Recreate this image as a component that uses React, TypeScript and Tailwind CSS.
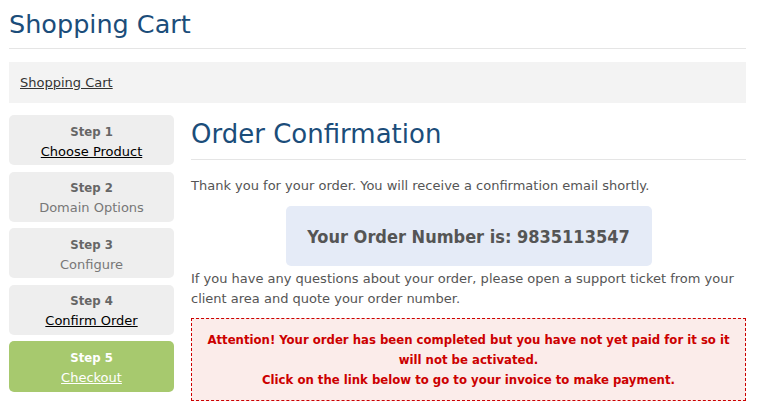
import React from 'react';

const steps = [
  { n: 1, label: 'Choose Product', link: true },
  { n: 2, label: 'Domain Options', link: false },
  { n: 3, label: 'Configure', link: false },
  { n: 4, label: 'Confirm Order', link: true },
  { n: 5, label: 'Checkout', link: true, active: true },
];

export default function App() {
  return (
    <div className="min-h-[411px] bg-white px-[9px] pt-[8px] font-['DejaVu_Sans',sans-serif] text-[13px] text-[#555]">
      <div className="w-[737px]">
        <h1 className="h-[41px] border-b border-[#e5e5e5] text-[25.5px] leading-[32px] text-[#1b4d7a]">Shopping Cart</h1>

        <div className="mt-[13px] h-[41px] bg-[#f3f3f3] px-[11px] leading-[41px]">
          <a href="#" className="text-[#333] underline">Shopping Cart</a>
        </div>

        <div className="mt-[12px] flex gap-[17px]">
          <div className="flex w-[165px] shrink-0 flex-col gap-[6.5px]">
            {steps.map((s) => (
              <div
                key={s.n}
                className={
                  s.active
                    ? 'flex h-[50.5px] flex-col items-center justify-center rounded-[5px] bg-[#a7c96e] pt-[2px] text-white'
                    : 'flex h-[50px] flex-col items-center justify-center rounded-[5px] bg-[#eeeeee] pt-[2px] text-[#777]'
                }
              >
                <div
                  className={
                    s.active
                      ? "font-['DejaVu_Sans_Condensed','DejaVu_Sans',sans-serif] font-bold leading-[20px] text-white"
                      : "font-['DejaVu_Sans_Condensed','DejaVu_Sans',sans-serif] font-bold leading-[20px] text-[#666]"
                  }
                >
                  Step {s.n}
                </div>
                {s.link ? (
                  <a href="#" className={s.active ? 'leading-[19px] text-white underline' : 'leading-[19px] text-black underline'}>
                    {s.label}
                  </a>
                ) : (
                  <div className="leading-[19px]">{s.label}</div>
                )}
              </div>
            ))}
          </div>

          <div className="flex-1">
            <h2 className="h-[45px] border-b border-[#e5e5e5] pt-[3px] text-[26px] leading-[32px] text-[#1b4d7a]">Order Confirmation</h2>
            <p className="mt-[16px] leading-[20px]">Thank you for your order. You will receive a confirmation email shortly.</p>
            <div className="mx-auto mt-[10px] flex h-[60px] w-[366px] items-center justify-center rounded-[5px] bg-[#e5ebf7] font-['DejaVu_Sans_Condensed','DejaVu_Sans',sans-serif] text-[18px] font-bold text-[#555]">
              Your Order Number is: 9835113547
            </div>
            <p className="mt-[3px] leading-[20px]">
              If you have any questions about your order, please open a support ticket from your client area and quote your order number.
            </p>
            <div className="mt-[9px] border border-dashed border-[#cc0000] bg-[#fbecea] px-[10px] pt-[11px] pb-[10px] text-center font-['DejaVu_Sans_Condensed','DejaVu_Sans',sans-serif] font-bold leading-[20px] text-[#cc0000]">
              Attention! Your order has been completed but you have not yet paid for it so it will not be activated.
              <br />
              Click on the link below to go to your invoice to make payment.
            </div>
          </div>
        </div>
      </div>
    </div>
  );
}
